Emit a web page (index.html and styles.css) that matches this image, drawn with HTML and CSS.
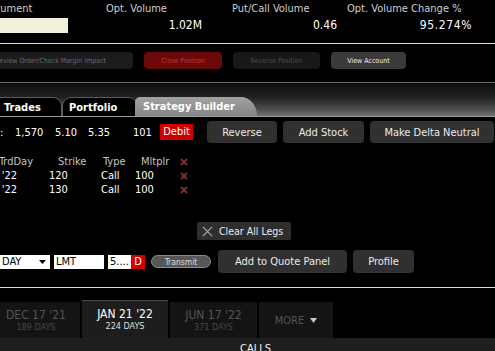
FILE: index.html
```html
<!DOCTYPE html>
<html lang="en">

<head>
    <meta charset="UTF-8">
    <meta name="viewport" content="width=device-width, initial-scale=1.0">
    <title>Strategy Builder</title>
    <link rel="stylesheet" href="styles.css">
</head>

<body>
    <div class="stats">
        <div class="stat stat-inst">
            <span class="stat-label">Instrument</span>
            <span class="inst-box"></span>
        </div>
        <div class="stat stat-vol">
            <span class="stat-label">Opt. Volume</span>
            <span class="stat-value">1.02M</span>
        </div>
        <div class="stat stat-pc">
            <span class="stat-label">Put/Call Volume</span>
            <span class="stat-value">0.46</span>
        </div>
        <div class="stat stat-chg">
            <span class="stat-label">Opt. Volume Change %</span>
            <span class="stat-value">95.274%</span>
        </div>
    </div>
    <div class="rule"></div>

    <div class="actions">
        <button class="act act-preview">Preview Order/Check Margin Impact</button>
        <button class="act act-close">Close Position</button>
        <button class="act act-reverse">Reverse Position</button>
        <button class="act act-account">View Account</button>
    </div>

    <div class="tabbar">
        <div class="tab tab-trades">Trades</div>
        <div class="tab tab-portfolio">Portfolio</div>
        <div class="tab tab-builder">Strategy Builder</div>
    </div>

    <div class="summary">
        <span class="sum sum-colon">:</span>
        <span class="sum sum-qty">1,570</span>
        <span class="sum sum-bid">5.10</span>
        <span class="sum sum-ask">5.35</span>
        <span class="sum sum-n">101</span>
        <span class="debit">Debit</span>
        <button class="btn btn-reverse">Reverse</button>
        <button class="btn btn-stock">Add Stock</button>
        <button class="btn btn-delta">Make Delta Neutral</button>
    </div>

    <div class="legs">
        <span class="leg-head c-day">Last TrdDay</span>
        <span class="leg-head c-strike">Strike</span>
        <span class="leg-head c-type">Type</span>
        <span class="leg-head c-mult">Mltplr</span>
        <span class="c-x"><svg viewBox="0 0 8 8" width="8" height="8"><path d="M1 1L7 7M7 1L1 7" /></svg></span>

        <span class="c-day">Jan 21 '22</span>
        <span class="c-strike">120</span>
        <span class="c-type">Call</span>
        <span class="c-mult">100</span>
        <span class="c-x"><svg viewBox="0 0 8 8" width="8" height="8"><path d="M1 1L7 7M7 1L1 7" /></svg></span>

        <span class="c-day">Jan 21 '22</span>
        <span class="c-strike">130</span>
        <span class="c-type">Call</span>
        <span class="c-mult">100</span>
        <span class="c-x"><svg viewBox="0 0 8 8" width="8" height="8"><path d="M1 1L7 7M7 1L1 7" /></svg></span>
    </div>

    <div class="clear-row">
        <button class="btn-clear">
            <svg viewBox="0 0 12 12" width="11" height="11"><path d="M1 1L11 11M11 1L1 11" /></svg>
            Clear All Legs
        </button>
    </div>

    <div class="order">
        <span class="field field-tif">DAY<svg viewBox="0 0 7 4" width="7" height="4"><path d="M0 0H7L3.5 4Z" /></svg></span>
        <span class="field field-type">LMT</span>
        <span class="field field-price">5....</span><span class="side">D</span>
        <button class="transmit">Transmit</button>
        <button class="btn btn-quote">Add to Quote Panel</button>
        <button class="btn btn-profile">Profile</button>
    </div>
    <div class="rule rule-low"></div>

    <div class="expiries">
        <div class="exp exp-dec">
            <span class="exp-date">DEC 17 '21</span>
            <span class="exp-days">189 DAYS</span>
        </div>
        <div class="exp exp-active">
            <span class="exp-date">JAN 21 '22</span>
            <span class="exp-days">224 DAYS</span>
        </div>
        <div class="exp">
            <span class="exp-date">JUN 17 '22</span>
            <span class="exp-days">371 DAYS</span>
        </div>
        <div class="exp exp-more">MORE <svg viewBox="0 0 7 5" width="7" height="5"><path d="M0 0H7L3.5 5Z" /></svg></div>
    </div>
    <div class="chain-head">CALLS</div>
</body>

</html>
```

FILE: styles.css
```css
body {
    margin: 0;
    width: 495px;
    height: 351px;
    overflow: hidden;
    background-color: #000;
    color: #fff;
    font-family: 'DejaVu Sans Condensed', 'DejaVu Sans', sans-serif;
    font-stretch: condensed;
    font-size: 11px;
}

button {
    font-family: inherit;
    font-stretch: condensed;
    border: none;
    padding: 0;
    cursor: pointer;
}

/* top stats */

.stats {
    display: flex;
    height: 43px;
}

.stat {
    display: flex;
    flex-direction: column;
    padding-top: 2px;
}

.stat-label {
    line-height: 13px;
    color: #cfcfcf;
}

.stat-value {
    margin-top: 3px;
    line-height: 15px;
    font-size: 12px;
    text-align: right;
}

.stat-inst {
    margin-left: -32px;
    width: 138px;
}

.stat-inst .stat-label {
    padding-left: 10px;
}

.inst-box {
    display: block;
    margin-top: 3px;
    width: 100px;
    height: 15px;
    background-color: #f2efdc;
}

.stat-vol {
    width: 96px;
}

.stat-pc {
    margin-left: 30px;
    width: 105px;
}

.stat-chg {
    margin-left: 10px;
    width: 125px;
}

.stat-chg .stat-value {
    letter-spacing: 0.6px;
}

.rule {
    height: 1px;
    background-color: #dcdcdc;
}

/* action buttons */

.actions {
    display: flex;
    gap: 11px;
    margin-top: 8px;
    height: 17px;
}

.act {
    height: 17px;
    border-radius: 4px;
    font-size: 7px;
}

.act-preview {
    margin-left: -34px;
    width: 167px;
    background-color: #1c1c1c;
    color: #6a6a6a;
}

.act-close {
    width: 78px;
    background-color: #6a0909;
    color: #c03838;
}

.act-reverse {
    width: 87px;
    background-color: #181818;
    color: #4c4c4c;
}

.act-account {
    width: 75px;
    background-color: #3a3a3a;
    color: #f0f0f0;
}

/* tabs */

.tabbar {
    display: flex;
    align-items: flex-end;
    margin-top: 13px;
    height: 33px;
    border-top: 1px solid #6a6a6a;
    border-bottom: 1px solid #9a9a9a;
    background: linear-gradient(to bottom, #0c0c0c 0%, #222 45%, #4e4e4e 80%, #727272 100%);
}

.tab {
    height: 19px;
    line-height: 19px;
    font-weight: bold;
    box-sizing: border-box;
}

.tab-trades {
    margin-left: -10px;
    width: 72px;
    padding-left: 13px;
    background-color: #000;
    border: 1px solid #5c5c5c;
    border-bottom: none;
    border-radius: 0 9px 0 0;
}

.tab-portfolio {
    width: 76px;
    padding-left: 6px;
    background-color: #000;
    border: 1px solid #5c5c5c;
    border-bottom: none;
    border-radius: 9px 9px 0 0;
}

.tab-builder {
    margin-left: -3px;
    width: 122px;
    padding-left: 8px;
    background: linear-gradient(to bottom, #a2a2a2, #858585);
    border-radius: 5px 16px 0 0 / 5px 19px 0 0;
}

/* summary row */

.summary {
    display: flex;
    align-items: center;
    margin-top: 4px;
    height: 22px;
}

.sum-colon {
    width: 15px;
}

.sum-qty {
    width: 40px;
}

.sum-bid {
    width: 33px;
}

.sum-ask {
    width: 45px;
}

.sum-n {
    width: 27px;
}

.debit {
    width: 33px;
    height: 16px;
    line-height: 16px;
    text-align: center;
    background-color: #cc0000;
}

.btn {
    height: 22px;
    border-radius: 4px;
    background-color: #303030;
    color: #ececec;
    font-size: 11px;
}

.btn-reverse {
    margin-left: 14px;
    width: 70px;
}

.btn-stock {
    margin-left: 6px;
    width: 81px;
}

.btn-delta {
    margin-left: 6px;
    width: 124px;
}

/* legs table */

.legs {
    display: grid;
    grid-template-columns: 49px 52px 34px 45px 20px;
    margin-top: 12px;
    line-height: 14px;
}

.leg-head {
    color: #c4c4c4;
}

.c-day {
    display: flex;
    justify-content: flex-end;
    padding-right: 32px;
    white-space: nowrap;
}

.leg-head.c-day {
    padding-right: 16px;
}

.leg-head.c-strike {
    padding-left: 9px;
}

.leg-head.c-type {
    padding-left: 2px;
}

.leg-head.c-mult {
    padding-left: 6px;
}

.c-x {
    display: flex;
    align-items: center;
}

.c-x svg {
    stroke: #7a3030;
    stroke-width: 2;
}

/* clear legs */

.clear-row {
    display: flex;
    margin-top: 25px;
}

.btn-clear {
    display: flex;
    align-items: center;
    gap: 6px;
    margin-left: 197px;
    width: 94px;
    height: 18px;
    padding-left: 5px;
    border-radius: 2px;
    background-color: #2e2e2e;
    color: #ececec;
    font-size: 10.5px;
}

.btn-clear svg {
    stroke: #b0b0b0;
    stroke-width: 1.2;
}

/* order row */

.order {
    display: flex;
    align-items: center;
    margin-top: 10px;
    height: 23px;
}

.field {
    display: flex;
    align-items: center;
    height: 14px;
    padding-left: 2px;
    box-sizing: border-box;
    background-color: #fff;
    color: #000;
}

.field-tif {
    justify-content: space-between;
    width: 50px;
    padding-right: 4px;
}

.field-type {
    margin-left: 4px;
    width: 50px;
}

.field-price {
    margin-left: 4px;
    width: 23px;
}

.side {
    width: 14px;
    height: 14px;
    line-height: 14px;
    text-align: center;
    background-color: #d40000;
}

.transmit {
    margin-left: 6px;
    width: 60px;
    height: 13px;
    border: 1px solid #8c8c8c;
    border-radius: 7px;
    background-color: #565656;
    color: #dcdcdc;
    font-size: 8.5px;
}

.btn-quote {
    margin-left: 7px;
    width: 129px;
    height: 23px;
}

.btn-profile {
    margin-left: 6px;
    width: 61px;
    height: 23px;
}

.rule-low {
    margin-top: 14px;
}

/* expiries */

.expiries {
    display: flex;
    align-items: flex-end;
    gap: 2px;
    margin-top: 12px;
    height: 38px;
}

.exp {
    display: flex;
    flex-direction: column;
    align-items: center;
    justify-content: center;
    width: 87px;
    height: 36px;
    background-color: #141414;
    color: #555;
}

.exp-dec {
    margin-left: -8px;
    width: 88px;
}

.exp-date {
    font-size: 12px;
    line-height: 14px;
}

.exp-days {
    font-size: 9px;
    line-height: 11px;
    color: #474747;
}

.exp-active {
    width: 86px;
    height: 38px;
    box-sizing: border-box;
    border-top: 1px solid #4a4a4a;
    background-color: #1d1d1d;
    color: #fff;
}

.exp-active .exp-days {
    color: #dedede;
}

.exp-more {
    flex-direction: row;
    gap: 6px;
    width: 74px;
}

.exp-more svg {
    fill: #c8c8c8;
}

.chain-head {
    height: 13px;
    padding: 5px 0 0 240px;
    box-sizing: border-box;
    background-color: #1f1f1f;
    color: #f0f0f0;
    font-size: 11px;
    line-height: 11px;
}
```
